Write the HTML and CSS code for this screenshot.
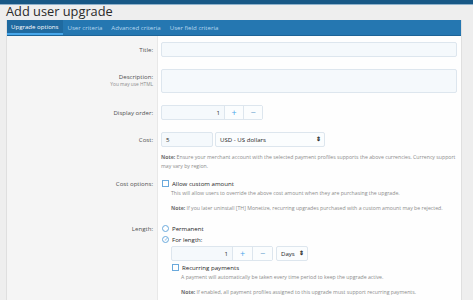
FILE: index.html
```html
<!DOCTYPE html>
<html>
<head>
    <title>Add user upgrade</title>
    <meta charset="utf-8">
    <link rel="stylesheet" href="styles.css">
</head>
<body>
    <div class="topbar"></div>
    <div class="page">
        <h1>Add user upgrade</h1>
        <div class="block">
            <div class="tabs">
                <span class="tab active">Upgrade options</span>
                <span class="tab">User criteria</span>
                <span class="tab">Advanced criteria</span>
                <span class="tab">User field criteria</span>
            </div>
            <div class="form">
                <div class="row">
                    <div class="label">Title:</div>
                    <div class="field">
                        <div class="input wide"></div>
                    </div>
                </div>
                <div class="row">
                    <div class="label">Description:<span class="hint">You may use HTML</span></div>
                    <div class="field">
                        <div class="input wide area"></div>
                    </div>
                </div>
                <div class="row">
                    <div class="label">Display order:</div>
                    <div class="field">
                        <div class="spin">
                            <div class="num">1</div>
                            <div class="btn plus">+</div>
                            <div class="btn minus">&minus;</div>
                        </div>
                    </div>
                </div>
                <div class="row">
                    <div class="label">Cost:</div>
                    <div class="field tight">
                        <div class="inline">
                            <div class="input cost">5</div>
                            <div class="input select currency">USD - US dollars<span class="arrows">&#8661;</span></div>
                        </div>
                        <div class="note"><b>Note:</b> Ensure your merchant account with the selected payment profiles supports the above currencies. Currency support may vary by region.</div>
                    </div>
                </div>
                <div class="row choices">
                    <div class="label">Cost options:</div>
                    <div class="field short">
                        <div class="choice"><span class="box"></span>Allow custom amount</div>
                        <div class="explain">This will allow users to override the above cost amount when they are purchasing the upgrade.</div>
                        <div class="explain note2"><b>Note:</b> If you later uninstall [TH] Monetize, recurring upgrades purchased with a custom amount may be rejected.</div>
                    </div>
                </div>
                <div class="row choices">
                    <div class="label">Length:</div>
                    <div class="field">
                        <div class="choice"><span class="box radio"></span>Permanent</div>
                        <div class="choice"><span class="box radio checked">&#10003;</span>For length:</div>
                        <div class="sub">
                            <div class="inline">
                                <div class="spin small">
                                    <div class="num">1</div>
                                    <div class="btn plus">+</div>
                                    <div class="btn minus">&minus;</div>
                                </div>
                                <div class="input select days">Days<span class="arrows">&#8661;</span></div>
                            </div>
                            <div class="choice"><span class="box"></span>Recurring payments</div>
                            <div class="explain">A payment will automatically be taken every time period to keep the upgrade active.</div>
                            <div class="explain note2"><b>Note:</b> If enabled, all payment profiles assigned to this upgrade must support recurring payments.</div>
                        </div>
                    </div>
                </div>
            </div>
        </div>
    </div>
</body>
</html>
```

FILE: styles.css
```css
body {
    margin: 0;
    background-color: #eeeeee;
    font-family: "Open Sans", "Noto Sans", sans-serif;
    color: #1e1e1e;
    overflow: hidden;
}

.topbar {
    height: 4px;
    background-color: #185886;
    border-bottom: 1px solid #8fb2cc;
}

.page {
    padding: 0 11px 0 6px;
}

h1 {
    margin: 0;
    height: 15px;
    font-size: 12.8px;
    line-height: 12px;
    font-weight: 400;
    color: #2a2a2a;
}

.block {
    background-color: #fefefe;
    border: 1px solid #dfdfdf;
    border-top: none;
}

.tabs {
    display: flex;
    height: 15px;
    background-color: #2577b1;
    border-bottom: 1px solid #1d6497;
}

.tab {
    padding: 0 4px;
    margin-right: 1px;
    font-size: 6.1px;
    line-height: 15px;
    color: #b6d6ef;
}

.tab.active {
    background-color: #1f6aa0;
    color: #ffffff;
    border-bottom: 2px solid #47a7eb;
    line-height: 14px;
    height: 13px;
}

.row {
    display: flex;
}

.label {
    width: 151px;
    flex-shrink: 0;
    box-sizing: border-box;
    padding: 9px 4px 6px 0;
    background-color: #f5f5f5;
    border-right: 1px solid #e8e8e8;
    text-align: right;
    font-size: 6.1px;
    line-height: 9px;
    color: #505050;
}

.choices .label {
    padding-top: 7px;
}

.hint {
    display: block;
    font-size: 4.8px;
    line-height: 7px;
    color: #8c8c8c;
}

.field {
    flex: 1;
    padding: 6px 4px 6px 3px;
}

.field.tight {
    padding-bottom: 1px;
}

.field.short {
    padding-bottom: 4px;
}

.input {
    height: 15px;
    box-sizing: border-box;
    background-color: #f5f9fc;
    border: 1px solid #dde6ee;
    border-radius: 2px;
    font-size: 6.1px;
    line-height: 13px;
    padding: 0 4px;
    color: #1e1e1e;
}

.area {
    height: 24px;
}

.inline {
    display: flex;
    gap: 2px;
}

.cost {
    width: 52px;
}

.select {
    position: relative;
    background-color: #fbfdfe;
}

.currency {
    width: 110px;
}

.days {
    width: 32px;
    margin-left: 1px;
}

.arrows {
    position: absolute;
    right: 3px;
    top: 0;
    font-size: 6px;
    font-weight: 700;
}

.spin {
    display: flex;
    width: 102px;
    height: 15px;
    box-sizing: border-box;
    border: 1px solid #dde6ee;
    border-radius: 2px;
    background-color: #f5f9fc;
}

.spin .num {
    flex: 1;
    text-align: right;
    font-size: 6.1px;
    line-height: 13px;
    padding-right: 4px;
}

.spin .btn {
    width: 18px;
    border-left: 1px solid #dde6ee;
    text-align: center;
    font-size: 9px;
    line-height: 13px;
    background-color: #fbfdfe;
}

.spin.small .btn {
    width: 19px;
}

.plus {
    color: #47a7eb;
}

.minus {
    color: #6fa6d0;
}

.note,
.explain {
    font-size: 5.2px;
    line-height: 9px;
    color: #8c8c8c;
}

.note {
    margin-top: 5.5px;
}

.note b,
.explain b {
    color: #6e6e6e;
    font-weight: 700;
}

.note2 {
    margin-top: 6px;
}

.choice {
    display: flex;
    align-items: center;
    height: 11px;
    font-size: 6.1px;
    color: #1e1e1e;
}

.box {
    display: inline-block;
    width: 5px;
    height: 5px;
    border: 1px solid #6aa9dc;
    margin-right: 3px;
    margin-left: 1px;
    background-color: #fff;
    font-size: 4.5px;
    line-height: 5px;
    text-align: center;
    color: #6aa9dc;
}

.radio {
    border-radius: 50%;
}

.explain {
    padding-left: 10px;
}

.sub {
    padding-left: 10px;
    padding-top: 1.5px;
}

.sub .choice {
    margin-top: 1px;
}
```
